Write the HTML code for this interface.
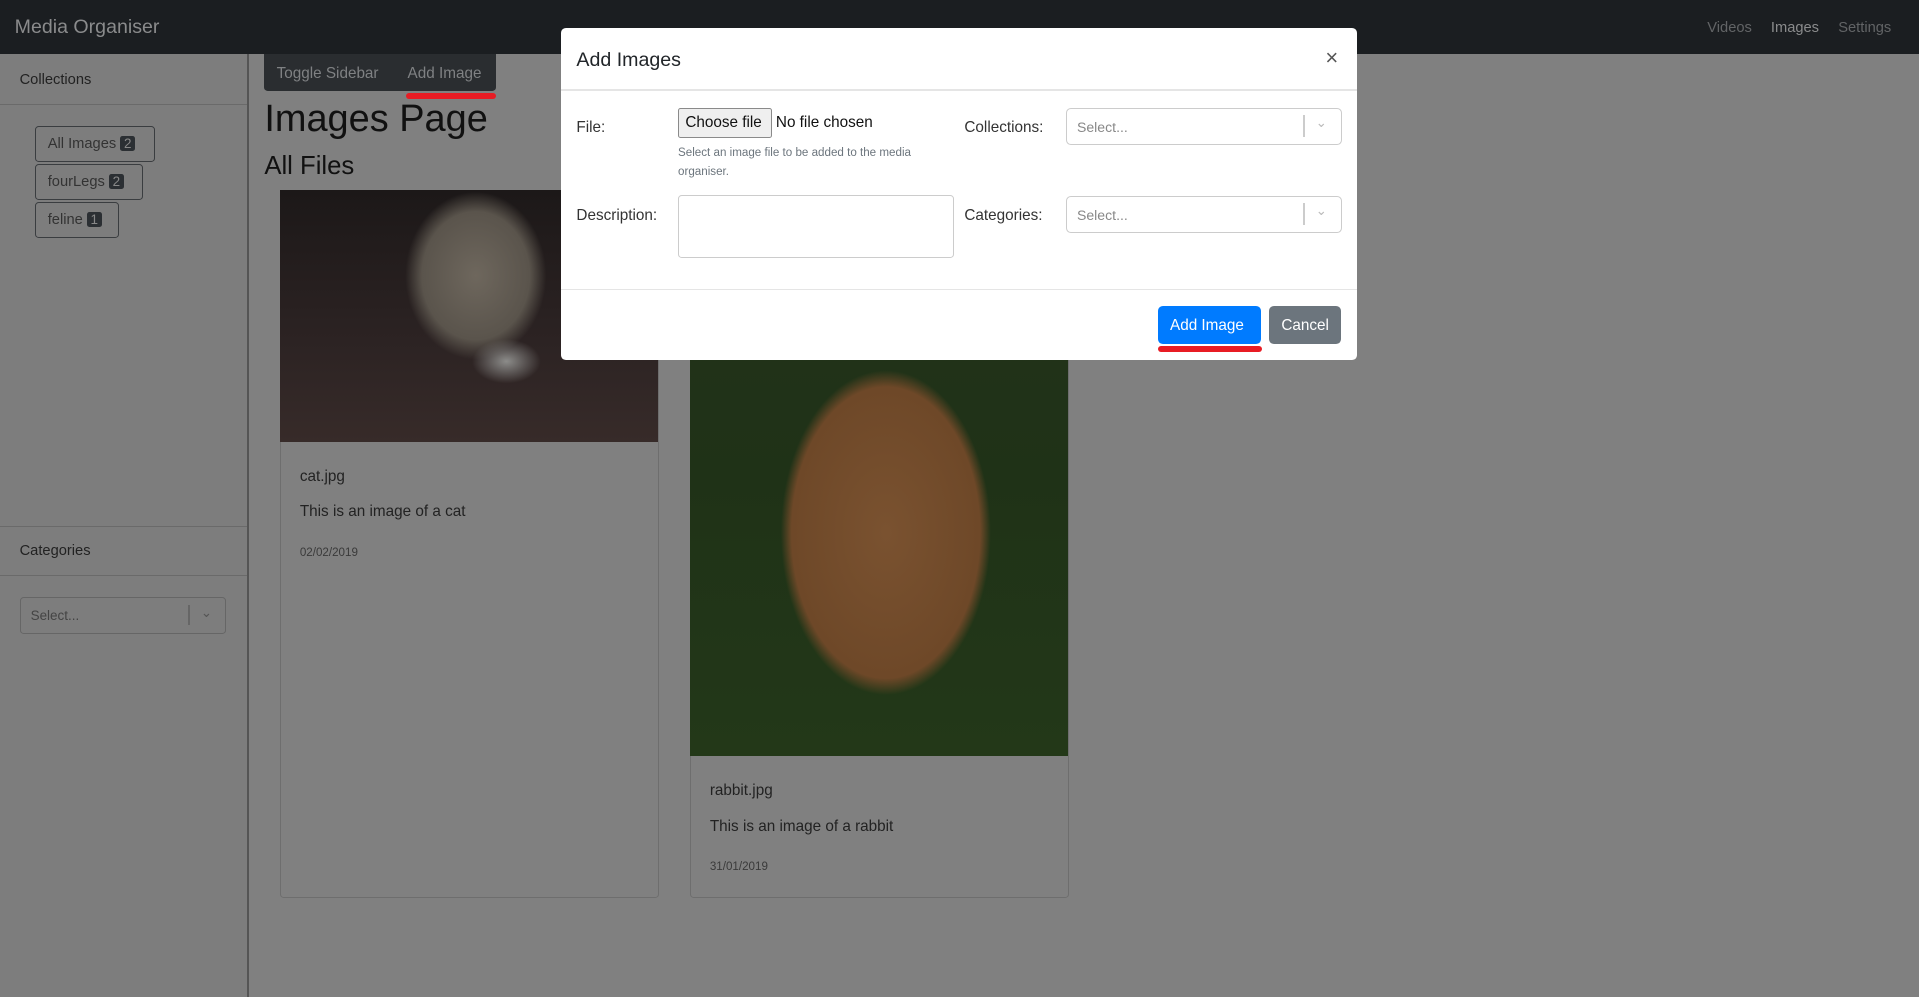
<!DOCTYPE html>
<html><head><meta charset="utf-8"><style>
html,body{margin:0;padding:0;width:1919px;height:997px;overflow:hidden;background:#808080;}
#w{zoom:1.22385;width:1568px;height:815px;position:relative;font-family:"Liberation Sans",sans-serif;color:#1a1a1a;}
.a{position:absolute;}
.t{position:absolute;white-space:nowrap;}
</style></head><body><div id="w">
<div class="a" style="left:0;top:0;width:1568px;height:44px;background:#1b1e21;"></div>
<div class="t" style="left:12px;top:13px;font-size:16px;color:#8a8b8c;">Media Organiser</div>
<div class="t" style="left:1395px;top:16px;font-size:12px;color:#626466;">Videos</div>
<div class="t" style="left:1447px;top:16px;font-size:12px;color:#8a8b8c;">Images</div>
<div class="t" style="left:1502px;top:16px;font-size:12px;color:#626466;">Settings</div>
<div class="a" style="left:0;top:44px;width:202px;height:771px;background:#7d7d7d;border-right:2px solid #555;"></div>
<div class="a" style="left:0;top:85px;width:202px;height:1px;background:#6a6a6a;"></div>
<div class="t" style="left:16px;top:59px;font-size:12px;color:#222;">Collections</div>
<div class="a" style="left:29px;top:103px;width:96px;height:28px;border:1px solid #3a3d40;border-radius:3px;"></div>
<div class="t" style="left:39px;top:111px;font-size:12px;color:#333;">All Images <span style="background:#2b2f33;color:#888;font-size:11px;padding:0 3px;border-radius:2px;">2</span></div>
<div class="a" style="left:29px;top:134px;width:86px;height:28px;border:1px solid #3a3d40;border-radius:3px;"></div>
<div class="t" style="left:39px;top:142px;font-size:12px;color:#333;">fourLegs <span style="background:#2b2f33;color:#888;font-size:11px;padding:0 3px;border-radius:2px;">2</span></div>
<div class="a" style="left:29px;top:165px;width:67px;height:28px;border:1px solid #3a3d40;border-radius:3px;"></div>
<div class="t" style="left:39px;top:173px;font-size:12px;color:#333;">feline <span style="background:#2b2f33;color:#888;font-size:11px;padding:0 3px;border-radius:2px;">1</span></div>
<div class="a" style="left:0;top:430px;width:202px;height:1px;background:#6a6a6a;"></div>
<div class="a" style="left:0;top:470px;width:202px;height:1px;background:#6a6a6a;"></div>
<div class="t" style="left:16px;top:444px;font-size:12px;color:#222;">Categories</div>
<div class="a" style="left:16px;top:488px;width:167px;height:28px;border:1px solid #666;border-radius:3px;"></div>
<div class="t" style="left:25px;top:497px;font-size:11px;color:#444;">Select...</div>
<div class="a" style="left:154px;top:494px;width:1px;height:17px;background:#666;"></div>
<div class="t" style="left:164px;top:494px;font-size:11px;color:#555;">&#8964;</div>
<div class="a" style="left:216px;top:44px;width:189px;height:30px;background:#2a2d30;border-radius:0 0 3px 3px;"></div>
<div class="t" style="left:226px;top:53px;font-size:12.5px;color:#7f8183;">Toggle Sidebar</div>
<div class="t" style="left:333px;top:53px;font-size:12.5px;color:#7f8183;">Add Image</div>
<div class="a" style="left:332px;top:76px;width:73px;height:5px;background:#e81c24;border-radius:3px;"></div>
<div class="t" style="left:216px;top:80px;font-size:31px;color:#111;">Images Page</div>
<div class="t" style="left:216px;top:124px;font-size:21px;color:#111;">All Files</div>
<div class="a" style="left:229px;top:155px;width:308px;height:577px;border:1px solid #6e6e6e;border-radius:3px;"></div>
<div class="a" style="left:229px;top:155px;width:309px;height:206px;background:radial-gradient(ellipse 28px 18px at 185px 140px,#8c8c8a,transparent),radial-gradient(ellipse 80px 95px at 160px 70px,#6e675d 0%,#5a544c 55%,transparent 72%),linear-gradient(#1c1818,#2c2323 60%,#372b29);"></div>
<div class="t" style="left:245px;top:382px;font-size:12.5px;color:#222;">cat.jpg</div>
<div class="t" style="left:245px;top:411px;font-size:12.5px;color:#222;">This is an image of a cat</div>
<div class="t" style="left:245px;top:446px;font-size:9.5px;color:#3a3a3a;">02/02/2019</div>
<div class="a" style="left:564px;top:155px;width:308px;height:577px;border:1px solid #6e6e6e;border-radius:3px;"></div>
<div class="a" style="left:564px;top:155px;width:309px;height:463px;background:radial-gradient(ellipse 110px 170px at 160px 280px,#7a5230 0%,#6e4828 70%,transparent 78%),linear-gradient(#24331a,#1f3217 50%,#233818);"></div>
<div class="t" style="left:580px;top:639px;font-size:12.5px;color:#222;">rabbit.jpg</div>
<div class="t" style="left:580px;top:668px;font-size:12.5px;color:#222;">This is an image of a rabbit</div>
<div class="t" style="left:580px;top:703px;font-size:9.5px;color:#3a3a3a;">31/01/2019</div>
<div class="a" style="left:458px;top:23px;width:651px;height:271px;background:#fff;border-radius:4px;"></div>
<div class="t" style="left:471px;top:40px;font-size:16px;color:#212529;">Add Images</div>
<div class="t" style="left:1083px;top:37px;font-size:18px;color:#555;">&times;</div>
<div class="a" style="left:458px;top:73px;width:651px;height:1px;background:#e5e5e5;"></div>
<div class="t" style="left:471px;top:97px;font-size:12.5px;color:#333;">File:</div>
<div class="a" style="left:554px;top:88px;width:75px;height:23px;background:#efefef;border:1px solid #8a8a8a;border-radius:2px;"></div>
<div class="t" style="left:560px;top:93px;font-size:12.5px;color:#111;">Choose file</div>
<div class="t" style="left:634px;top:93px;font-size:12.5px;color:#111;">No file chosen</div>
<div class="t" style="left:554px;top:118px;font-size:9.5px;color:#6c757d;line-height:15px;">Select an image file to be added to the media<br>organiser.</div>
<div class="t" style="left:788px;top:97px;font-size:12.5px;color:#333;">Collections:</div>
<div class="a" style="left:871px;top:88px;width:224px;height:29px;border:1px solid #ccc;border-radius:4px;"></div>
<div class="t" style="left:880px;top:97px;font-size:11.5px;color:#888;">Select...</div>
<div class="a" style="left:1065px;top:94px;width:1px;height:18px;background:#ccc;"></div>
<div class="t" style="left:1075px;top:94px;font-size:11px;color:#bbb;">&#8964;</div>
<div class="t" style="left:471px;top:169px;font-size:12.5px;color:#333;">Description:</div>
<div class="a" style="left:554px;top:159px;width:224px;height:50px;border:1px solid #ccc;border-radius:3px;"></div>
<div class="t" style="left:788px;top:169px;font-size:12.5px;color:#333;">Categories:</div>
<div class="a" style="left:871px;top:160px;width:224px;height:29px;border:1px solid #ccc;border-radius:4px;"></div>
<div class="t" style="left:880px;top:169px;font-size:11.5px;color:#888;">Select...</div>
<div class="a" style="left:1065px;top:166px;width:1px;height:18px;background:#ccc;"></div>
<div class="t" style="left:1075px;top:166px;font-size:11px;color:#bbb;">&#8964;</div>
<div class="a" style="left:458px;top:236px;width:651px;height:1px;background:#e5e5e5;"></div>
<div class="a" style="left:946px;top:250px;width:84px;height:31px;background:#007bff;border-radius:4px;"></div>
<div class="t" style="left:956px;top:259px;font-size:12.5px;color:#fff;">Add Image</div>
<div class="a" style="left:1037px;top:250px;width:59px;height:31px;background:#6c757d;border-radius:4px;"></div>
<div class="t" style="left:1047px;top:259px;font-size:12.5px;color:#fff;">Cancel</div>
<div class="a" style="left:946px;top:283px;width:85px;height:5px;background:#e81c24;border-radius:3px;"></div>
</div></body></html>
